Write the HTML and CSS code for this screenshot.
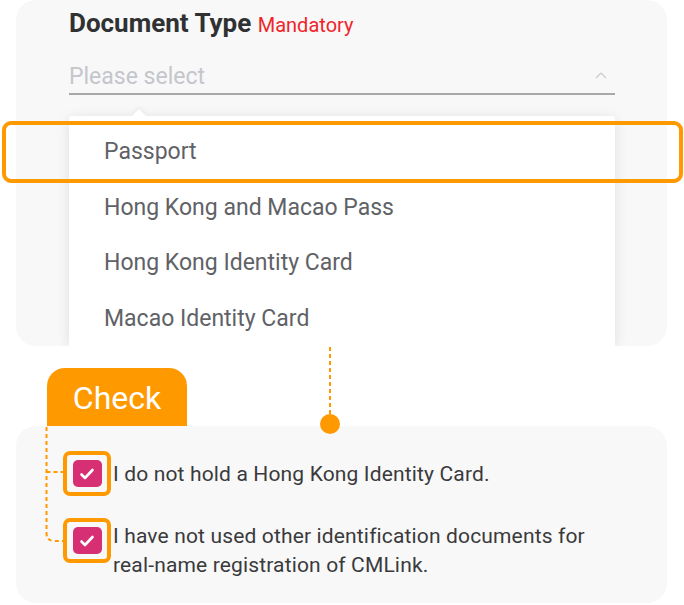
FILE: index.html
```html
<html lang="en">
<head>
    <meta charset="UTF-8">
    <meta name="viewport" content="width=device-width, initial-scale=1.0">
    <title>Document Type</title>
    <link rel="stylesheet" href="styles.css">
</head>
<body>
    <div class="page">
        <div class="card top-card">
            <div class="field-label">Document Type <span class="mandatory">Mandatory</span></div>
            <div class="select">
                <span class="placeholder">Please select</span>
                <svg class="caret" width="12" height="8" viewBox="0 0 12 8"><polyline points="1,7 6,2 11,7" fill="none" stroke="#c8c9cc" stroke-width="1.2"/></svg>
            </div>
            <div class="dropdown">
                <ul>
                    <li>Passport</li>
                    <li>Hong Kong and Macao Pass</li>
                    <li>Hong Kong Identity Card</li>
                    <li>Macao Identity Card</li>
                </ul>
            </div>
        </div>

        <div class="check-tab">Check</div>
        <div class="card bottom-card">
            <div class="check-row single">
                <span class="mark"><span class="box"><svg width="18" height="16" viewBox="0 0 18 16"><polyline points="3.5,8.5 7,12 14.5,4" fill="none" stroke="#fff" stroke-width="2.6" stroke-linecap="round" stroke-linejoin="round"/></svg></span></span>
                <span class="check-text">I do not hold a Hong Kong Identity Card.</span>
            </div>
            <div class="check-row">
                <span class="mark"><span class="box"><svg width="18" height="16" viewBox="0 0 18 16"><polyline points="3.5,8.5 7,12 14.5,4" fill="none" stroke="#fff" stroke-width="2.6" stroke-linecap="round" stroke-linejoin="round"/></svg></span></span>
                <span class="check-text">I have not used other identification documents for real-name registration of CMLink.</span>
            </div>
        </div>

        <!-- annotation overlays -->
        <div class="highlight"></div>
        <svg class="connector" width="684" height="605" viewBox="0 0 684 605">
            <line x1="330" y1="347" x2="330" y2="414" stroke="#ff9900" stroke-width="2" stroke-dasharray="4 3"/>
            <circle cx="330" cy="424" r="10" fill="#ff9900"/>
            <path d="M46.5 427 V533 Q46.5 541 54.5 541 H64" fill="none" stroke="#ff9900" stroke-width="2" stroke-dasharray="4 3"/>
            <line x1="46.5" y1="472" x2="64" y2="472" stroke="#ff9900" stroke-width="2" stroke-dasharray="4 3"/>
        </svg>
    </div>
</body>
</html>
```

FILE: styles.css
```css
body {margin: 0; background-color: #fff; font-family: Roboto, "Liberation Sans", sans-serif;}
.page {position: relative; width: 684px; height: 605px; overflow: hidden;}
.card {background-color: #f8f8f8; border-radius: 20px; margin: 0 17px 0 16px;}
.top-card {height: 346px; padding-left: 53px; padding-right: 52px; box-sizing: border-box; overflow: hidden;}
.field-label {padding-top: 8px; font-size: 26px; font-weight: bold; color: #303133; line-height: 30px;}
.mandatory {font-size: 20px; font-weight: normal; color: #f0242b;}
.select {display: flex; justify-content: space-between; align-items: center; margin-top: 19px; height: 34px; border-bottom: 2px solid #a8a8a8;}
.placeholder {font-size: 23px; color: #c4c6cc;}
.caret {margin-right: 8px; margin-top: -2px;}
.dropdown {position: relative; margin-top: 21px; background-color: #fff; border-radius: 4px 4px 0 0; box-shadow: 0 2px 14px rgba(0, 0, 0, 0.1);}
.dropdown::before {content: ""; position: absolute; top: -5px; left: 65px; width: 10px; height: 10px; background-color: #fff; transform: rotate(45deg); box-shadow: -2px -2px 4px rgba(0, 0, 0, 0.04);}
.dropdown ul {position: relative; list-style-type: none; margin: 0; padding: 8px 0 0; background-color: #fff; border-radius: 4px 4px 0 0;}
.dropdown li {height: 55.5px; line-height: 55.5px; padding-left: 35px; font-size: 23px; color: #606266;}
.check-tab {margin: 22px 0 0 47px; width: 140px; height: 58px; border-radius: 18px 18px 0 0; background-color: #ff9900; color: #fff; font-size: 32px; line-height: 60px; text-align: center;}
.bottom-card {height: 177px; padding: 25px 0 0 47px; box-sizing: border-box;}
.check-row {display: flex; align-items: flex-start; margin-bottom: 22px;}
.mark {flex: none; width: 48px; height: 45px; box-sizing: border-box; border: 4px solid #ff9900; border-radius: 7px; display: flex; align-items: center; justify-content: center;}
.box {width: 29px; height: 27px; border-radius: 5px; background-color: #d62f73; display: flex; align-items: center; justify-content: center;}
.check-text {margin-left: 2px; padding-top: 4px; font-size: 21px; letter-spacing: 0.15px; line-height: 29px; color: #3a3a3c; max-width: 490px;}
.single .check-text {padding-top: 9px;}
.highlight {position: absolute; left: 2px; top: 121px; width: 681px; height: 62px; box-sizing: border-box; border: 4px solid #ff9900; border-radius: 9px;}
.connector {position: absolute; left: 0; top: 0;}
```
